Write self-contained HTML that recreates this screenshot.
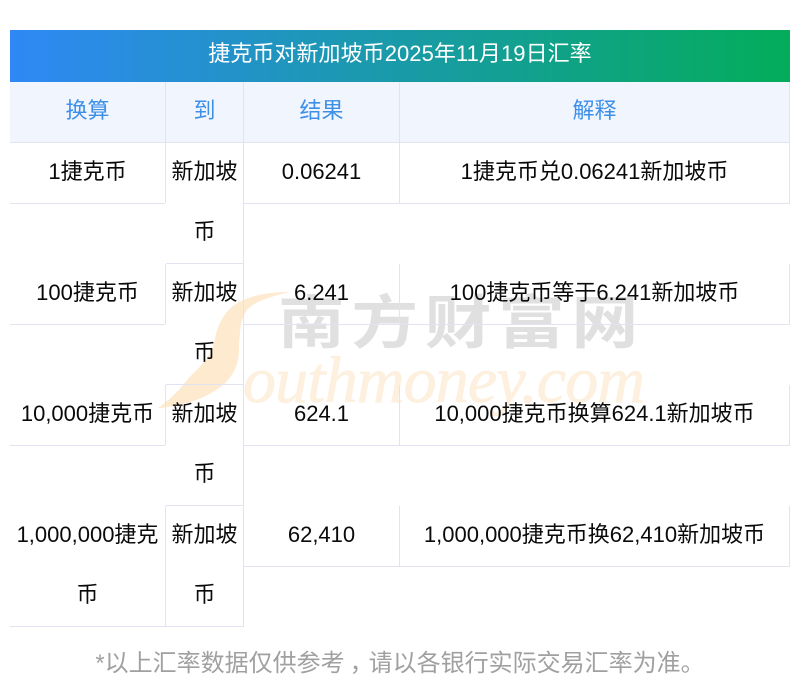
<!DOCTYPE html>
<html><head><meta charset="utf-8"><style>
html,body{margin:0;padding:0;background:#fff;width:800px;height:693px;overflow:hidden}
body{position:relative;font-family:Helvetica,Arial,sans-serif;font-size:22px;color:#0a0a0a}
div{position:absolute}
.title{left:10px;top:30px;width:780px;height:52px;line-height:47px;text-align:center;color:#fff;letter-spacing:.06px;background:linear-gradient(90deg,#2f88f5,#03ad5a)}
.hbg{left:10px;top:82px;width:780px;height:60px;background:#f1f6fe}
.h{color:#3d8fe8;top:82px;height:60px;line-height:58px;text-align:center}
.l{background:#e1e4f0}
.c{text-align:center;height:60px;line-height:58px}
.f{left:0;width:800px;top:642px;text-align:center;font-size:24px;line-height:44px;color:#a0a0a0}
.f span{display:inline-block;transform:translateX(5px)}
svg{position:absolute;left:0;top:0}
</style></head><body>
<div class="title">捷克币对新加坡币2025年11月19日汇率</div>
<div class="hbg"></div>
<svg width="800" height="693">
<path d="M290 292C265 292 238 297 226 313C216 327 216 335 213 347C207 362 197 369 187 380C178 392 168 401 158 408C180 407 212 398 228 380C238 368 239 358 239 347C240 332 240 323 245 313C250 303 268 297 290 292Z" fill="#fdeacf"/>
<text transform="translate(278 343) scale(1.15 1)" font-family="'Noto Sans CJK SC',sans-serif" font-weight="700" font-size="58" letter-spacing="5.8" fill="#e0e0e0">南方财富网</text>
<text x="243" y="402" font-family="'Liberation Serif',serif" font-style="italic" font-size="66" textLength="402" lengthAdjust="spacing" fill="#fdf0de" stroke="#fdf0de" stroke-width="0.8">outhmoney.com</text>
</svg>

<!-- header -->
<div class="h" style="left:10px;width:155px">换算</div>
<div class="h" style="left:166px;width:77px">到</div>
<div class="h" style="left:244px;width:155px">结果</div>
<div class="h" style="left:400px;width:389px">解释</div>
<div class="l" style="left:165px;top:82px;width:1px;height:60px"></div>
<div class="l" style="left:243px;top:82px;width:1px;height:60px"></div>
<div class="l" style="left:399px;top:82px;width:1px;height:60px"></div>
<div class="l" style="left:789px;top:82px;width:1px;height:60px"></div>
<div class="l" style="left:10px;top:142px;width:780px;height:1px"></div>

<!-- vertical continuous -->
<div class="l" style="left:243px;top:143px;width:1px;height:484px"></div>

<!-- row 1 -->
<div class="l" style="left:165px;top:143px;width:1px;height:60px"></div>
<div class="l" style="left:399px;top:143px;width:1px;height:60px"></div>
<div class="l" style="left:789px;top:143px;width:1px;height:60px"></div>
<div class="l" style="left:10px;top:203px;width:155px;height:1px"></div>
<div class="l" style="left:243px;top:203px;width:547px;height:1px"></div>
<div class="l" style="left:166px;top:263px;width:77px;height:1px"></div>
<!-- row 2 -->
<div class="l" style="left:165px;top:264px;width:1px;height:60px"></div>
<div class="l" style="left:399px;top:264px;width:1px;height:60px"></div>
<div class="l" style="left:789px;top:264px;width:1px;height:60px"></div>
<div class="l" style="left:10px;top:324px;width:155px;height:1px"></div>
<div class="l" style="left:243px;top:324px;width:547px;height:1px"></div>
<div class="l" style="left:166px;top:384px;width:77px;height:1px"></div>
<!-- row 3 -->
<div class="l" style="left:165px;top:385px;width:1px;height:60px"></div>
<div class="l" style="left:399px;top:385px;width:1px;height:60px"></div>
<div class="l" style="left:789px;top:385px;width:1px;height:60px"></div>
<div class="l" style="left:10px;top:445px;width:155px;height:1px"></div>
<div class="l" style="left:243px;top:445px;width:547px;height:1px"></div>
<div class="l" style="left:166px;top:505px;width:77px;height:1px"></div>
<!-- row 4 -->
<div class="l" style="left:165px;top:506px;width:1px;height:120px"></div>
<div class="l" style="left:399px;top:506px;width:1px;height:60px"></div>
<div class="l" style="left:789px;top:506px;width:1px;height:60px"></div>
<div class="l" style="left:243px;top:566px;width:547px;height:1px"></div>
<div class="l" style="left:10px;top:626px;width:234px;height:1px"></div>

<!-- text -->
<div class="c" style="left:10px;top:143px;width:155px">1捷克币</div>
<div class="c" style="left:166px;top:143px;width:77px">新加坡</div>
<div class="c" style="left:166px;top:203px;width:77px">币</div>
<div class="c" style="left:244px;top:143px;width:155px">0.06241</div>
<div class="c" style="left:400px;top:143px;width:389px">1捷克币兑0.06241新加坡币</div>

<div class="c" style="left:10px;top:264px;width:155px">100捷克币</div>
<div class="c" style="left:166px;top:264px;width:77px">新加坡</div>
<div class="c" style="left:166px;top:324px;width:77px">币</div>
<div class="c" style="left:244px;top:264px;width:155px">6.241</div>
<div class="c" style="left:400px;top:264px;width:389px">100捷克币等于6.241新加坡币</div>

<div class="c" style="left:10px;top:385px;width:155px">10,000捷克币</div>
<div class="c" style="left:166px;top:385px;width:77px">新加坡</div>
<div class="c" style="left:166px;top:445px;width:77px">币</div>
<div class="c" style="left:244px;top:385px;width:155px">624.1</div>
<div class="c" style="left:400px;top:385px;width:389px">10,000捷克币换算624.1新加坡币</div>

<div class="c" style="left:10px;top:506px;width:155px">1,000,000捷克</div>
<div class="c" style="left:10px;top:566px;width:155px">币</div>
<div class="c" style="left:166px;top:506px;width:77px">新加坡</div>
<div class="c" style="left:166px;top:566px;width:77px">币</div>
<div class="c" style="left:244px;top:506px;width:155px">62,410</div>
<div class="c" style="left:400px;top:506px;width:389px">1,000,000捷克币换62,410新加坡币</div>

<div class="f">*以上汇率数据仅供参考<span>，</span>请以各银行实际交易汇率为准。</div>
</body></html>
